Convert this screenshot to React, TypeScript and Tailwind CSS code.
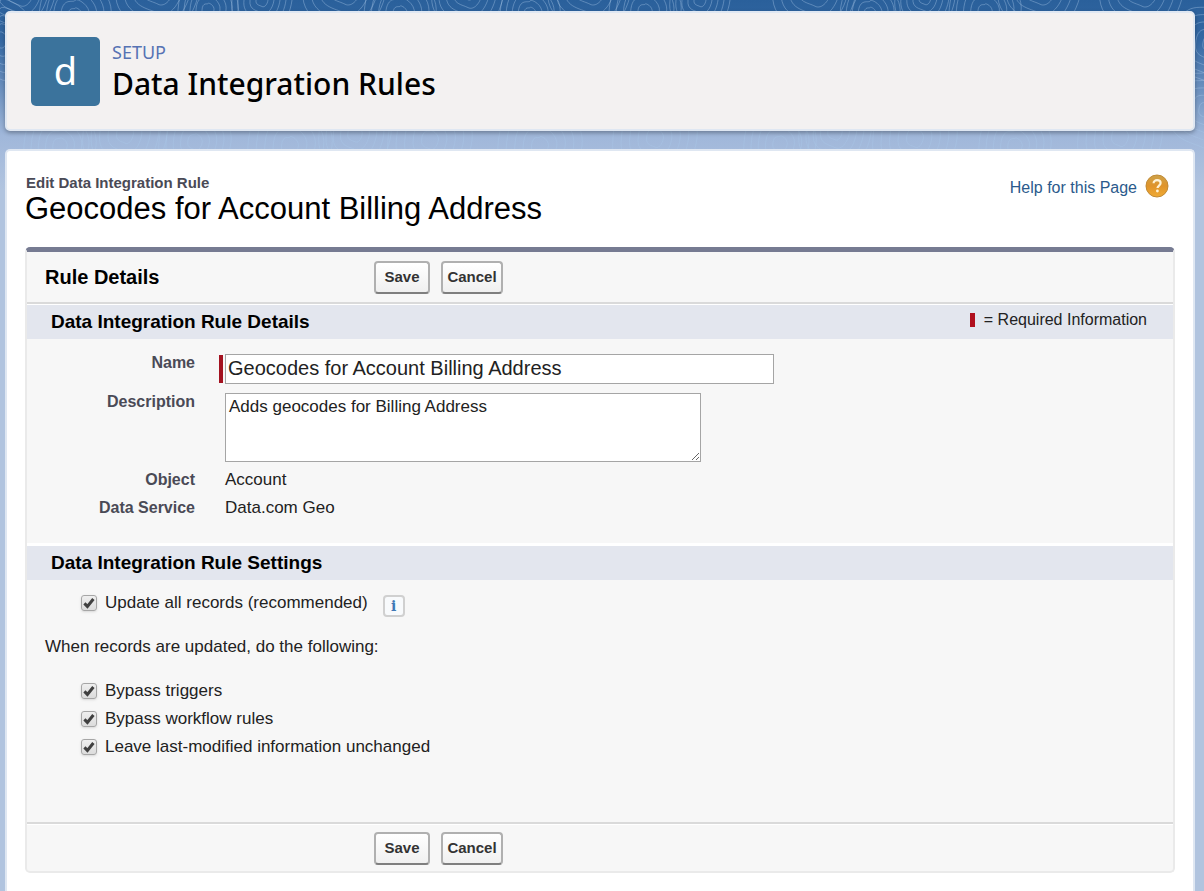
import { useState } from 'react';

const contourCenters = [
  { x: 20, y: -10, r: 6 },
  { x: 75, y: 16, r: 6 },
  { x: 158, y: -14, r: 7 },
  { x: 208, y: 10, r: 5 },
  { x: 262, y: 0, r: 5 },
  { x: 345, y: -14, r: 7 },
  { x: 400, y: 14, r: 6 },
  { x: 468, y: -8, r: 6 },
  { x: 530, y: 14, r: 5 },
  { x: 590, y: -14, r: 7 },
  { x: 645, y: 12, r: 6 },
  { x: 700, y: 0, r: 5 },
  { x: 815, y: -12, r: 7 },
  { x: 870, y: 14, r: 5 },
  { x: 925, y: -2, r: 5 },
  { x: 985, y: 12, r: 6 },
  { x: 1040, y: -14, r: 7 },
  { x: 1142, y: -12, r: 7 },
  { x: 1210, y: 44, r: 6 },
  { x: 0, y: 40, r: 6 },
  { x: 60, y: 146, r: 6 },
  { x: 125, y: 134, r: 7 },
  { x: 195, y: 142, r: 6 },
  { x: 290, y: 146, r: 7 },
  { x: 355, y: 134, r: 6 },
  { x: 430, y: 140, r: 7 },
  { x: 540, y: 146, r: 7 },
  { x: 655, y: 138, r: 7 },
  { x: 780, y: 144, r: 6 },
  { x: 835, y: 132, r: 6 },
  { x: 915, y: 138, r: 7 },
  { x: 1015, y: 146, r: 6 },
  { x: 1120, y: 137, r: 7 },
  { x: 1206, y: 110, r: 6 },
];

const rings = [1, 2, 3, 4, 5];

const Contours = () => (
  <svg className="absolute inset-x-0 top-0 h-[220px] w-full" aria-hidden="true">
    <g fill="none" stroke="#a9c8e8" strokeOpacity="0.4">
      {contourCenters.map(({ x, y, r }) =>
        rings.map(ring => {
          const w = r * ring * 1.2;
          const h = r * ring * 1.3;
          return (
            <path
              key={`${x}-${ring}`}
              d={`M${x - w} ${y}c${w * 0.1} ${-h * 1.3} ${w * 0.9} ${-h * 0.8} ${w} ${-h}s${w * 1.1} ${h * 0.3} ${w} ${h}s${-w * 0.6} ${h * 1.2} ${-w} ${h}s${-w * 1.1} ${-h * 0.2} ${-w} ${-h}z`}
            />
          );
        })
      )}
    </g>
  </svg>
);

const HelpIcon = () => (
  <svg className="size-6" viewBox="0 0 24 24" aria-hidden="true">
    <defs>
      <linearGradient id="help-fill" x1="0" y1="0" x2="0" y2="1">
        <stop offset="0" stopColor="#cda24a" />
        <stop offset="0.5" stopColor="#e0942a" />
        <stop offset="1" stopColor="#f0ab35" />
      </linearGradient>
    </defs>
    <circle cx="12" cy="12" r="11" fill="url(#help-fill)" stroke="#c18a35" />
    <path
      d="M8.6 9.3c0-2 1.5-3.1 3.5-3.1s3.5 1.1 3.5 2.9c0 2.4-3.1 2.6-3.1 5"
      fill="none"
      stroke="#fff3d6"
      strokeWidth="2.2"
    />
    <circle cx="12.4" cy="17" r="1.4" fill="#fff3d6" />
  </svg>
);

const Actions = () => (
  <div className="flex gap-[11px]">
    <button
      type="button"
      className="h-[33px] w-14 rounded-[4px] border-2 border-[#b0b0b0] border-b-[#7f7f7f] bg-linear-to-b from-white to-[#f0f0f0] text-[15px] font-bold text-[#333]"
    >
      Save
    </button>
    <button
      type="button"
      className="h-[33px] w-[62px] rounded-[4px] border-2 border-[#b0b0b0] border-b-[#7f7f7f] bg-linear-to-b from-white to-[#f0f0f0] text-[15px] font-bold text-[#333]"
    >
      Cancel
    </button>
  </div>
);

interface OptionProps {
  id: string;
  label: string;
}

const Option = ({ id, label }: OptionProps) => {
  const [checked, setChecked] = useState(true);

  return (
    <div className="flex h-7 items-center gap-2">
      <span className="relative size-4">
        <input
          id={id}
          type="checkbox"
          checked={checked}
          onChange={e => setChecked(e.target.checked)}
          className="block size-4 appearance-none rounded-[3px] border border-[#a6a6a6] bg-linear-to-b from-[#efefef] to-[#dcdcdc] shadow-sm"
        />
        {checked && (
          <svg
            className="pointer-events-none absolute inset-0 size-4"
            viewBox="0 0 16 16"
            fill="none"
            stroke="#404040"
            aria-hidden="true"
          >
            <path d="M3.4 8.4l3 3L12.4 4" strokeWidth="3" />
          </svg>
        )}
      </span>
      <label htmlFor={id}>{label}</label>
    </div>
  );
};

const App = () => {
  const [name, setName] = useState('Geocodes for Account Billing Address');
  const [description, setDescription] = useState('Adds geocodes for Billing Address');

  return (
    <div className="relative flex min-h-screen flex-col gap-[18px] bg-[#b1c4df] bg-[linear-gradient(#2a609b_0px,#3468a3_40px,#a0b7da_135px,#b1c4df_190px)] pt-[11px] pr-[9px] pl-[5px] font-['Liberation_Sans',Arial,sans-serif] text-[17px] text-[#222]">
      <Contours />

      <header className="relative flex items-center gap-3 rounded-[5px] border-2 border-[#dfe7f2] bg-[#f3f1f1] px-6 pt-6 pb-[23px] font-['Noto_Sans',sans-serif] shadow-[0_2px_4px_rgba(0,0,0,0.3)]">
        <div className="flex size-[69px] items-center justify-center rounded-[5px] bg-[#3b739c] pb-[3px] text-[38px] leading-none text-white">
          d
        </div>
        <div>
          <p className="text-[18px] leading-6 text-[#5673b4]">SETUP</p>
          <h1 className="text-[30px] leading-10 font-medium text-black">Data Integration Rules</h1>
        </div>
      </header>

      <main className="relative flex-1 rounded-t-[5px] border-2 border-b-0 border-[#dfe7f2] bg-white px-[18px] pt-[23px] pb-[19px]">
        <div className="flex items-start justify-between">
          <div>
            <p className="pl-px text-[15px] leading-[18px] font-bold text-[#4a4a56]">Edit Data Integration Rule</p>
            <h2 className="text-[31px] leading-[34px] text-black">Geocodes for Account Billing Address</h2>
          </div>
          <a href="#help" className="mr-[6px] flex items-start gap-2 text-[16px] leading-6 text-[#2b5a8c]">
            <span className="pt-[2px]">Help for this Page</span>
            <HelpIcon />
          </a>
        </div>

        <form className="mt-[21px] rounded-[5px] border-2 border-t-[5px] border-[#eaeaea] border-t-[#767b92] bg-[#f7f7f7]">
          <div className="flex h-[52px] items-center border-b-2 border-[#dadada]">
            <h3 className="w-[347px] pl-[18px] text-[20px] font-bold text-black">Rule Details</h3>
            <Actions />
          </div>

          <div className="flex h-[35px] items-center justify-between border-t border-white bg-[#e3e6ee] pr-[26px] pl-6">
            <h3 className="text-[19px] font-bold text-black">Data Integration Rule Details</h3>
            <div className="flex items-center gap-[9px] pb-1 text-[16px]">
              <span className="h-[14px] w-[5px] bg-[#b00f1e]" />
              = Required Information
            </div>
          </div>

          <div className="grid grid-cols-[168px_1fr] gap-x-6 pt-[15px] pb-[21px]">
            <label htmlFor="rule-name" className="text-right text-[16px] leading-[18px] font-bold text-[#4a4a56]">
              Name
            </label>
            <div className="mb-[9px] flex items-center gap-[2px]">
              <span className="h-7 w-1 bg-[#a31220]" />
              <input
                id="rule-name"
                type="text"
                required
                value={name}
                onChange={e => setName(e.target.value)}
                className="h-[30px] w-[549px] border border-[#a5a5a5] bg-white px-[2px] pb-[2px] text-[20px]"
              />
            </div>

            <label htmlFor="rule-description" className="text-right text-[16px] leading-[18px] font-bold text-[#4a4a56]">
              Description
            </label>
            <div className="mb-1 pl-[6px]">
              <textarea
                id="rule-description"
                value={description}
                onChange={e => setDescription(e.target.value)}
                className="block h-[69px] w-[476px] border border-[#a5a5a5] bg-white px-[3px] py-[3px] leading-5"
              />
            </div>

            <div className="text-right text-[16px] leading-7 font-bold text-[#4a4a56]">Object</div>
            <div className="pl-[6px] leading-7">Account</div>

            <div className="text-right text-[16px] leading-7 font-bold text-[#4a4a56]">Data Service</div>
            <div className="pl-[6px] leading-7">Data.com Geo</div>
          </div>

          <div className="flex h-[37px] items-center border-t-[3px] border-white bg-[#e3e6ee] pl-6">
            <h3 className="text-[19px] font-bold text-black">Data Integration Rule Settings</h3>
          </div>

          <div className="pt-[9px] pb-[61px] pl-[18px]">
            <div className="flex items-end gap-[15px] pl-9">
              <Option id="update-all" label="Update all records (recommended)" />
              <button
                type="button"
                aria-label="Information"
                className="flex size-[22px] items-center justify-center rounded-[4px] border-2 border-[#d0d0d0] bg-[#f8fafc] font-['DejaVu_Serif',serif] text-[14px] leading-none font-bold text-[#3f78b5]"
              >
                i
              </button>
            </div>
            <p className="my-4 leading-7">When records are updated, do the following:</p>
            <div className="pl-9">
              <Option id="bypass-triggers" label="Bypass triggers" />
              <Option id="bypass-workflow" label="Bypass workflow rules" />
              <Option id="leave-modified" label="Leave last-modified information unchanged" />
            </div>
          </div>

          <div className="border-t-2 border-[#dadada]">
            <div className="flex h-[47px] items-center border-t border-white pl-[347px]">
              <Actions />
            </div>
          </div>
        </form>
      </main>
    </div>
  );
};

export default App;
